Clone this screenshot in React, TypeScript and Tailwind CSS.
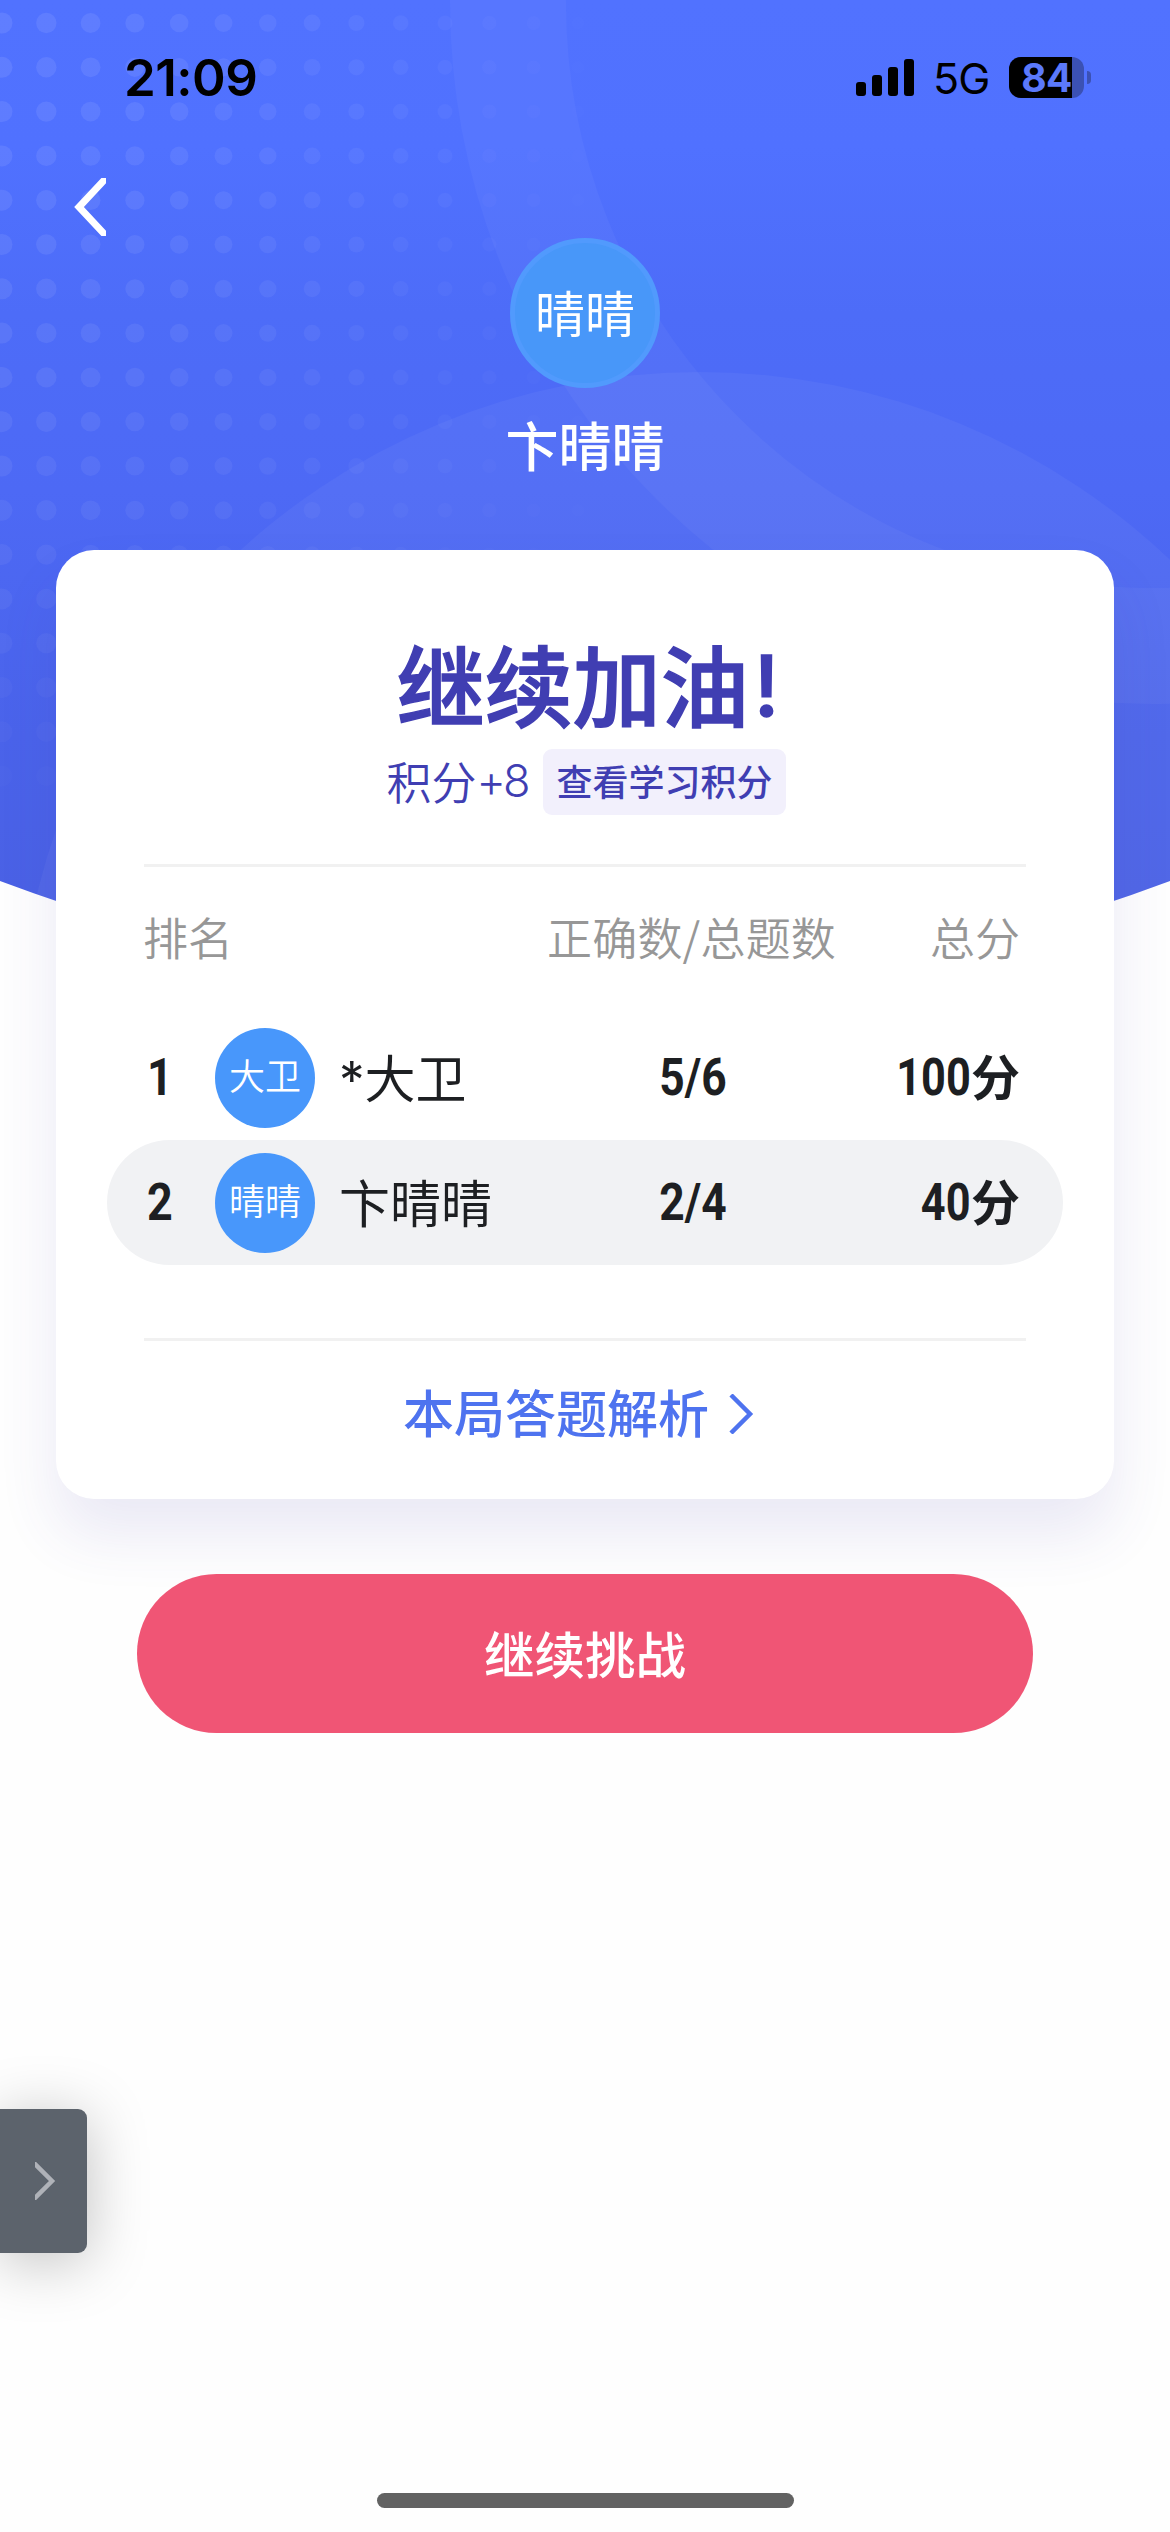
type Player = {
  rank: number;
  nickname: string;
  name: string;
  answers: string;
  score: number;
  current?: boolean;
};

const players: Player[] = [
  { rank: 1, nickname: '大卫', name: '*大卫', answers: '5/6', score: 100 },
  { rank: 2, nickname: '晴晴', name: '卞晴晴', answers: '2/4', score: 40, current: true },
];

const dotColumns = Array.from({ length: 14 }, (_, i) => i);
const dotRows = Array.from({ length: 18 }, (_, i) => i);

function HeroBackground() {
  return (
    <svg className="absolute left-0 top-0 h-[980px] w-[1170px]" viewBox="0 0 1170 980" aria-hidden="true">
      <defs>
        <linearGradient id="sky" x1="0" y1="0" x2="0" y2="1">
          <stop offset="0" stopColor="#5172ff" />
          <stop offset="0.15" stopColor="#5071ff" />
          <stop offset="0.32" stopColor="#4d6cf8" />
          <stop offset="0.5" stopColor="#4d69f5" />
          <stop offset="0.75" stopColor="#4a63ea" />
          <stop offset="1" stopColor="#4a60e2" />
        </linearGradient>
        <clipPath id="hero">
          <path d="M0 0H1170V881Q585 1100 0 881Z" />
        </clipPath>
      </defs>
      <g clipPath="url(#hero)">
        <rect width="1170" height="980" fill="url(#sky)" />
        {dotRows.map((row) =>
          dotColumns.map((col) => (
            <circle
              key={`${row}-${col}`}
              cx={2 + col * 44.3}
              cy={23 + row * 44.3}
              r={10.5 - col * 0.3}
              fill="#fff"
              opacity={0.085 * (1 - (col / 14) ** 1.6) * (1 - (row / 19) ** 2)}
            />
          ))
        )}
        <circle cx="1152" cy="2" r="644" fill="none" stroke="#fff" strokeOpacity="0.035" strokeWidth="116" />
        <circle cx="700" cy="1054" r="682" fill="#fff" fillOpacity="0.045" />
      </g>
    </svg>
  );
}

function StatusBar() {
  return (
    <div className="flex h-[156px] items-start justify-between pl-[124px] pr-[79px] text-black">
      <span className="mt-[46px] font-['Inter',sans-serif] text-[51px] font-semibold leading-[64px] tracking-[-0.5px]">21:09</span>
      <div className="mt-[57px] flex h-[41px] items-center">
        <div className="flex h-[37px] items-end gap-[6px]">
          <i className="h-[14px] w-[10px] rounded-[3px] bg-black" />
          <i className="h-[21px] w-[10px] rounded-[3px] bg-black" />
          <i className="h-[29px] w-[10px] rounded-[3px] bg-black" />
          <i className="h-[37px] w-[10px] rounded-[3px] bg-black" />
        </div>
        <span className="ml-[19px] w-[76px] pt-[2px] font-['Inter',sans-serif] text-[43px] font-normal leading-[41px] tracking-[-1px]">5G</span>
        <div className="flex h-[41px] w-[75px] rounded-[12px] bg-[#3b51b4]">
          <div className="flex w-[63px] items-center justify-end rounded-l-[12px] bg-black font-['Inter',sans-serif] text-[39px] font-bold leading-[41px] tracking-[-0.5px] text-[#5b79fb]">
            84
          </div>
        </div>
        <i className="ml-[3px] h-[13px] w-[4px] rounded-r-full bg-[#3b51b4]" />
      </div>
    </div>
  );
}

function PlayerRow({ player }: { player: Player }) {
  return (
    <li
      className={
        player.current
          ? 'flex h-[125px] items-center rounded-full bg-[#f1f2f4] pl-[38px] pr-[45px]'
          : 'flex h-[125px] items-center rounded-full pl-[38px] pr-[45px]'
      }
    >
      <span className="w-[30px] origin-center scale-x-[0.88] text-center font-['Roboto',sans-serif] text-[51px] font-bold leading-none">
        {player.rank}
      </span>
      <span className="ml-[40px] flex size-[100px] items-center justify-center rounded-full bg-[#4897fb] pb-[8px] text-[36px] font-[350] leading-none text-white">
        {player.nickname}
      </span>
      <span className="ml-[24px] w-[264px] pt-[3px] font-['Inter','Noto_Sans_CJK_SC',sans-serif] text-[51px] leading-none">{player.name}</span>
      <span className="w-[180px] origin-center scale-x-[0.87] text-center font-['Roboto',sans-serif] text-[51px] font-bold leading-none">
        {player.answers}
      </span>
      <span className="ml-auto flex items-center text-[49px] font-bold leading-none">
        <span className="origin-right scale-x-[0.85] font-['Roboto',sans-serif] text-[51px]">{player.score}</span>
        <span className="-mr-[2px] pb-[6px]">分</span>
      </span>
    </li>
  );
}

export default function App() {
  return (
    <div className="relative flex h-[2532px] w-[1170px] flex-col overflow-hidden bg-[#fefefe] font-['Noto_Sans_CJK_SC',sans-serif] text-[#1d1f22]">
      <HeroBackground />

      <div className="relative flex flex-1 flex-col">
        <StatusBar />

        <header className="flex h-[394px] flex-col">
          <button type="button" aria-label="返回" className="ml-[72px] mt-[22px] h-[58px] w-[36px]">
            <svg className="h-[58px] w-[34px]" viewBox="0 0 34 58" fill="none">
              <path d="M37 -3L7 29L37 61" stroke="#fff" strokeWidth="7" />
            </svg>
          </button>
          <div className="mt-[2px] flex flex-col items-center text-white">
            <div className="flex size-[150px] items-center justify-center rounded-full border-[5px] border-[#519afd] bg-[#4897f9] pb-[5px] text-[50px] leading-none">
              晴晴
            </div>
            <h1 className="mt-[26px] text-[53px] font-medium leading-[60px]">卞晴晴</h1>
          </div>
        </header>

        <main className="mx-[56px] flex h-[949px] flex-col rounded-[38px] bg-white shadow-[0_36px_60px_rgba(75,60,170,0.11)]">
          <section className="flex h-[314px] flex-col items-center text-[#403eb2]">
            <h2 className="mt-[84px] flex pl-[6px] text-[88px] font-medium leading-[96px] [-webkit-text-stroke:1.5px_#403eb2]">
              继续加油<span className="ml-[5px] pt-[4px] font-['Inter',sans-serif] text-[84px] font-medium">!</span>
            </h2>
            <div className="mt-[15px] flex h-[66px] items-center pl-[2px]">
              <span className="flex w-[144px] items-center pb-[4px] text-[45px] font-[350] leading-none">
                积分<span className="font-['Inter',sans-serif] font-light tracking-[-3px]">+8</span>
              </span>
              <button type="button" className="ml-[13px] flex h-[66px] items-center rounded-[9px] bg-[#f2f0fc] px-[13px] pb-[4px] text-[36px] font-medium leading-none">
                查看学习积分
              </button>
            </div>
          </section>

          <section className="mx-[88px] h-[477px] border-y-[3px] border-[#f1f1f1]">
            <div className="flex h-[140px] items-center pb-[2px] text-[45px] font-[350] leading-none text-[#979797]">
              <span className="-ml-px w-[404px]">排名</span>
              <span className="tracking-[0.2px]">正确数/总题数</span>
              <span className="ml-auto mr-[6px]">总分</span>
            </div>
            <ul className="-mx-[37px] mt-[8px]">
              {players.map((player) => (
                <PlayerRow key={player.rank} player={player} />
              ))}
            </ul>
          </section>

          <a href="#" className="ml-[347px] mt-[40px] flex h-[66px] items-center text-[51px] font-medium leading-none text-[#4e73ef]">
            <span className="pb-[6px]">本局答题解析</span>
            <svg className="ml-[20px] h-[40px] w-[26px]" viewBox="0 0 26 40" fill="none">
              <path d="M2 1L21 20L2 39" stroke="currentColor" strokeWidth="4.5" />
            </svg>
          </a>
        </main>

        <button type="button" className="mx-[137px] mt-[75px] flex h-[159px] items-center justify-center rounded-full bg-[#f05575] pb-[2px] text-[50.5px] font-medium leading-none text-white">
          继续挑战
        </button>

        <button
          type="button"
          aria-label="展开"
          className="mt-[376px] flex h-[144px] w-[87px] items-center rounded-r-[9px] bg-[#5c636c] pl-[35px] shadow-[0_8px_60px_rgba(0,0,0,0.25)]"
        >
          <svg className="h-[38px] w-[22px]" viewBox="0 0 22 38" fill="none">
            <path d="M-3 -1L17 19L-3 39" stroke="#afb2b8" strokeWidth="4.5" />
          </svg>
        </button>

        <div className="mx-auto mt-auto mb-[24px] h-[15px] w-[417px] rounded-full bg-[#626262]" />
      </div>
    </div>
  );
}
